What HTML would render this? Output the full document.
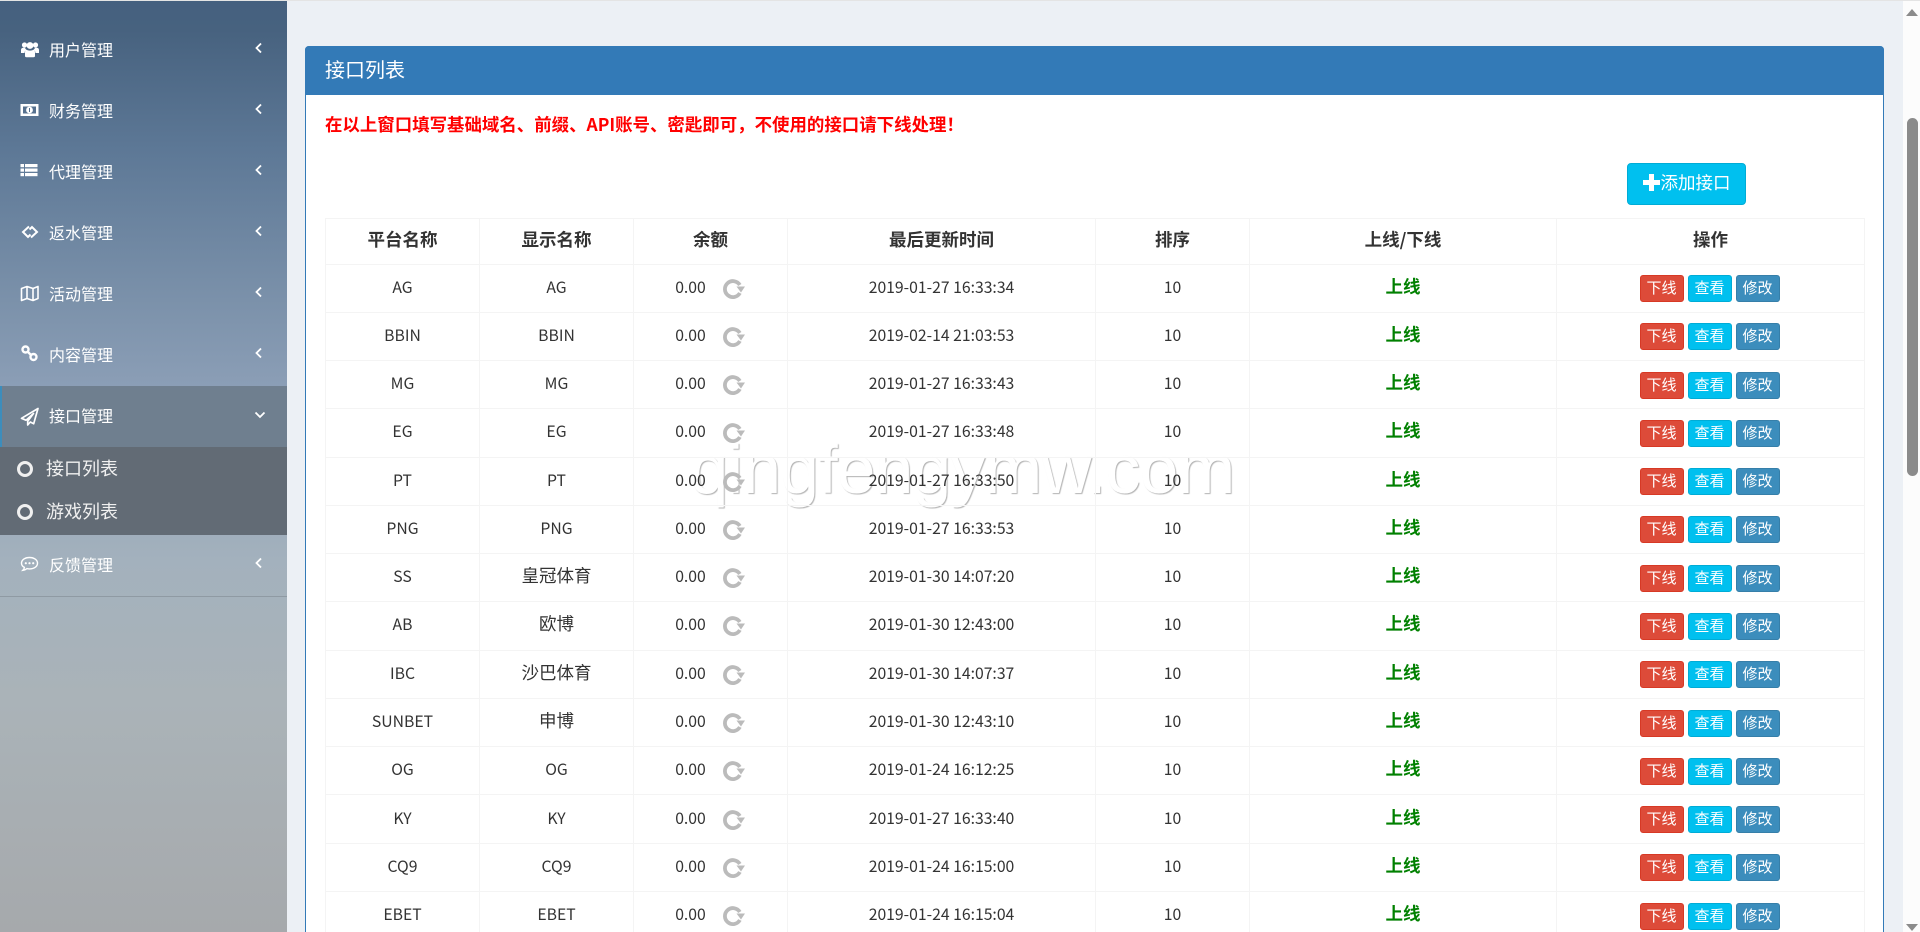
<!DOCTYPE html>
<html lang="zh"><head><meta charset="utf-8"><title>接口列表</title>
<style>
*{box-sizing:border-box}
html,body{margin:0;width:1920px;height:932px;overflow:hidden;background:#ecf0f5;font-family:"Noto Sans CJK SC","Liberation Sans",sans-serif;color:#333}
#wrap{position:relative;width:1920px;height:932px;overflow:hidden;background:#ecf0f5}
#top{position:absolute;left:0;top:0;width:1920px;height:1px;background:#e4e4e4;z-index:5}
#side{position:absolute;left:0;top:0;width:287px;height:932px;background:linear-gradient(180deg,#45607f 0,#47627f 30px,#5d7896 150px,#7b91aa 300px,#8b9eb6 386px,#a3b1bd 560px,#aab3b8 700px,#a6a9ac 932px)}
.m{position:absolute;left:0;width:287px;height:61px;color:#fff;font-size:16px}
.m b{position:absolute;left:49px;top:calc(50% - 2px);transform:translateY(-50%);font-weight:400;line-height:20px;white-space:nowrap}
.m svg.i{position:absolute;left:20px;top:19px;width:20px;height:20px}
.m svg.c{position:absolute;left:254px;top:22px;width:10px;height:12px}
#act{background:#6f7f8f;border-left:2px solid #3c8dbc}
#sub{position:absolute;left:0;top:447px;width:287px;height:88px;background:#626b75}
.s{position:absolute;left:46px;color:#f0f0f0;font-size:18px;line-height:24px;white-space:nowrap}
.r{position:absolute;left:17px;width:16px;height:16px;border:3px solid #f0f0f0;border-radius:50%}
#ln{position:absolute;left:0;top:596px;width:287px;height:1px;background:#8f9aa3}
#panel{position:absolute;left:305px;top:46px;width:1579px;height:900px;background:#fff;border:1px solid #337ab7;border-radius:4px 4px 0 0}
#head{position:absolute;left:-1px;top:-1px;width:1579px;height:49px;background:#337ab7;border-radius:4px 4px 0 0;color:#fff;font-size:20px;line-height:45px;padding-left:20px}
#red{position:absolute;left:325px;top:112px;color:#f00;font-weight:700;font-size:17.45px;line-height:26px;white-space:nowrap}
#add{position:absolute;left:1627px;top:163px;width:119px;height:42px;background:#00c0ef;border:1px solid #00acd6;border-radius:4px;color:#fff;font-size:17.5px;line-height:38px;text-align:center;white-space:nowrap}
#add svg{vertical-align:-2px;margin-right:1px}
table{position:absolute;left:325px;top:218px;width:1539px;table-layout:fixed;border-collapse:collapse;font-size:15.75px}
th,td{border:1px solid #f4f4f4;text-align:center;vertical-align:middle;white-space:nowrap}
th{height:45.5px;padding:0 0 2px;font-size:17.5px;font-weight:700;color:#333;line-height:24px}
td{height:48.27px;padding:0 0 3px;line-height:24px;color:#333}
td span{font-size:17.5px}
.g{color:#008000;font-weight:700;font-size:17.5px;position:relative;top:0}
td svg{vertical-align:-6px;margin-left:16px;position:relative;top:2px}
.b{display:inline-block;width:44px;height:27px;border-radius:3px;color:#fff;font-size:15px;line-height:23px;border:1px solid;margin:0 2px;text-align:center;position:relative;top:2px;left:-1px}
.d{background:#dd4b39;border-color:#d73925}.v{background:#00c0ef;border-color:#00acd6}.e{background:#3c8dbc;border-color:#367fa9}
#wm{position:absolute;left:690px;top:425px;font-family:"Liberation Sans",sans-serif;font-size:69px;line-height:90px;color:#fff;text-shadow:1px 1px 1px rgba(0,0,0,.3);white-space:nowrap;letter-spacing:-.5px}
#sb{position:absolute;left:1903px;top:1px;width:17px;height:931px;background:#fcfcfc}
#th{position:absolute;left:1907px;top:118px;width:11px;height:358px;background:#8b8b8b;border-radius:6px}
.ar{position:absolute;left:1906px;width:0;height:0;border-left:6.5px solid transparent;border-right:6.5px solid transparent}
</style></head><body>
<div id="wrap">
<div id="top"></div>
<div id="side">
<div class="m" style="top:20px"><svg class="i" viewBox="0 0 20 20" fill="#fff"><circle cx="4.5" cy="6" r="2.6"/><circle cx="15.5" cy="6" r="2.6"/><circle cx="10" cy="6.5" r="3.4"/><path d="M1 14v-3c0-1.5 1-2.2 2.5-2.2h1.5c.2 1 1 1.6 1.6 2-1.400.6-2 1.700-2 3.200zM19 14v-3c0-1.500-1-2.200-2.500-2.200H15c-.2 1-1 1.600-1.600 2 1.400.6 2 1.700 2 3.200zM6 11c.800-.4 1.600.6 4 .6s3.200-1 4-.6c.8.4 1 1.500 1 3v3c0 1-.8 1.200-1.500 1.200h-7C5.800 18.200 5 18 5 17v-3c0-1.500.2-2.600 1-3z"/></svg><b>用户管理</b><svg class="c" viewBox="0 0 10 12"><path d="M7 1.500 2.500 6 7 10.500" fill="none" stroke="#fff" stroke-width="1.800"/></svg></div>
<div class="m" style="top:81px"><svg class="i" viewBox="0 0 20 20"><path fill="#fff" fill-rule="evenodd" d="M.5 4h18v12H.5zM3 6.500v7h13v-7z"/><circle cx="9.500" cy="10" r="3.400" fill="#fff"/><rect x="9" y="8" width="1" height="4" fill="#55708e"/></svg><b>财务管理</b><svg class="c" viewBox="0 0 10 12"><path d="M7 1.500 2.500 6 7 10.500" fill="none" stroke="#fff" stroke-width="1.800"/></svg></div>
<div class="m" style="top:142px"><svg class="i" viewBox="0 0 20 20" fill="#fff"><rect x=".5" y="3" width="3.500" height="3.200"/><rect x="5" y="3" width="12.500" height="3.200"/><rect x=".5" y="7.500" width="3.500" height="3.200"/><rect x="5" y="7.500" width="12.500" height="3.200"/><rect x=".5" y="12" width="3.500" height="3.200"/><rect x="5" y="12" width="12.500" height="3.200"/></svg><b>代理管理</b><svg class="c" viewBox="0 0 10 12"><path d="M7 1.500 2.500 6 7 10.500" fill="none" stroke="#fff" stroke-width="1.800"/></svg></div>
<div class="m" style="top:203px"><svg class="i" viewBox="0 0 20 20" fill="none" stroke="#fff" stroke-width="2"><path d="M9 4.500 3 10l5 5 2.500-2.500M11 15.500 17 10l-5-5-2.500 2.500"/></svg><b>返水管理</b><svg class="c" viewBox="0 0 10 12"><path d="M7 1.500 2.500 6 7 10.500" fill="none" stroke="#fff" stroke-width="1.800"/></svg></div>
<div class="m" style="top:264px"><svg class="i" viewBox="0 0 20 20" fill="none" stroke="#fff" stroke-width="1.600" stroke-linejoin="round"><path d="M1.500 5.500 7 3.500l6 2 5-2v12l-5 2-6-2-5.500 2zM7 3.500v12M13 5.500v12"/></svg><b>活动管理</b><svg class="c" viewBox="0 0 10 12"><path d="M7 1.500 2.500 6 7 10.500" fill="none" stroke="#fff" stroke-width="1.800"/></svg></div>
<div class="m" style="top:325px"><svg class="i" viewBox="0 0 20 20" fill="none" stroke="#fff" stroke-width="2.400"><circle cx="5.500" cy="5.500" r="3"/><circle cx="13.500" cy="13" r="3"/><path d="M8 8l3 3"/></svg><b>内容管理</b><svg class="c" viewBox="0 0 10 12"><path d="M7 1.500 2.500 6 7 10.500" fill="none" stroke="#fff" stroke-width="1.800"/></svg></div>
<div class="m" id="act" style="top:386px"><svg class="i" style="left:18px;top:21px" viewBox="0 0 20 20" fill="none" stroke="#fff" stroke-width="1.700" stroke-linejoin="round"><path d="M18 1.500 1.500 11.300l4.500 1.900 7.500-6.700-5.800 7.700v3.800l2.600-3 3.400 1.700z"/></svg><b style="left:47px">接口管理</b><svg class="c" style="left:252px;top:24px;width:12px;height:10px" viewBox="0 0 12 10"><path d="M1.500 2.500 6 7l4.500-4.500" fill="none" stroke="#fff" stroke-width="1.800"/></svg></div>
<div id="sub"><div class="r" style="top:14px"></div><div class="s" style="top:9px">接口列表</div><div class="r" style="top:57px"></div><div class="s" style="top:52px">游戏列表</div></div>
<div class="m" style="top:535px"><svg class="i" viewBox="0 0 20 20" fill="none" stroke="#fff" stroke-width="1.400"><path d="M9.500 3.500c4.500 0 8 2.400 8 5.700s-3.500 5.700-8 5.700c-1 0-1.800-.1-2.600-.3-1 .9-2.300 1.500-4 1.700.8-.8 1.400-1.800 1.500-2.900-1.900-1-2.900-2.500-2.900-4.200 0-3.300 3.500-5.700 8-5.700z"/><g fill="#fff" stroke="none"><circle cx="5.800" cy="9.200" r="1.100"/><circle cx="9.500" cy="9.200" r="1.100"/><circle cx="13.200" cy="9.200" r="1.100"/></g></svg><b>反馈管理</b><svg class="c" viewBox="0 0 10 12"><path d="M7 1.500 2.500 6 7 10.500" fill="none" stroke="#fff" stroke-width="1.800"/></svg></div>
<div id="ln"></div>
</div>
<div id="panel"><div id="head">接口列表</div></div>
<div id="red">在以上窗口填写基础域名、前缀、API账号、密匙即可，不使用的接口请下线处理！</div>
<div id="add"><svg width="17" height="17" viewBox="0 0 17 17"><path fill="#fff" d="M6 0h5v6h6v5h-6v6H6v-6H0V6h6z"/></svg>添加接口</div>
<div id="wm">qingfengymw.com</div>
<table>
<colgroup><col style="width:154px"><col style="width:154px"><col style="width:154px"><col style="width:308px"><col style="width:154px"><col style="width:307px"><col style="width:308px"></colgroup>
<tr><th>平台名称</th><th>显示名称</th><th>余额</th><th>最后更新时间</th><th>排序</th><th>上线/下线</th><th>操作</th></tr>
<tr><td>AG</td><td>AG</td><td>0.00<svg width="24" height="24" viewBox="0 0 24 24"><use href="#rf"/></svg></td><td>2019-01-27 16:33:34</td><td>10</td><td><span class="g">上线</span></td><td><a class="b d">下线</a><a class="b v">查看</a><a class="b e">修改</a></td></tr>
<tr><td>BBIN</td><td>BBIN</td><td>0.00<svg width="24" height="24" viewBox="0 0 24 24"><use href="#rf"/></svg></td><td>2019-02-14 21:03:53</td><td>10</td><td><span class="g">上线</span></td><td><a class="b d">下线</a><a class="b v">查看</a><a class="b e">修改</a></td></tr>
<tr><td>MG</td><td>MG</td><td>0.00<svg width="24" height="24" viewBox="0 0 24 24"><use href="#rf"/></svg></td><td>2019-01-27 16:33:43</td><td>10</td><td><span class="g">上线</span></td><td><a class="b d">下线</a><a class="b v">查看</a><a class="b e">修改</a></td></tr>
<tr><td>EG</td><td>EG</td><td>0.00<svg width="24" height="24" viewBox="0 0 24 24"><use href="#rf"/></svg></td><td>2019-01-27 16:33:48</td><td>10</td><td><span class="g">上线</span></td><td><a class="b d">下线</a><a class="b v">查看</a><a class="b e">修改</a></td></tr>
<tr><td>PT</td><td>PT</td><td>0.00<svg width="24" height="24" viewBox="0 0 24 24"><use href="#rf"/></svg></td><td>2019-01-27 16:33:50</td><td>10</td><td><span class="g">上线</span></td><td><a class="b d">下线</a><a class="b v">查看</a><a class="b e">修改</a></td></tr>
<tr><td>PNG</td><td>PNG</td><td>0.00<svg width="24" height="24" viewBox="0 0 24 24"><use href="#rf"/></svg></td><td>2019-01-27 16:33:53</td><td>10</td><td><span class="g">上线</span></td><td><a class="b d">下线</a><a class="b v">查看</a><a class="b e">修改</a></td></tr>
<tr><td>SS</td><td><span>皇冠体育</span></td><td>0.00<svg width="24" height="24" viewBox="0 0 24 24"><use href="#rf"/></svg></td><td>2019-01-30 14:07:20</td><td>10</td><td><span class="g">上线</span></td><td><a class="b d">下线</a><a class="b v">查看</a><a class="b e">修改</a></td></tr>
<tr><td>AB</td><td><span>欧博</span></td><td>0.00<svg width="24" height="24" viewBox="0 0 24 24"><use href="#rf"/></svg></td><td>2019-01-30 12:43:00</td><td>10</td><td><span class="g">上线</span></td><td><a class="b d">下线</a><a class="b v">查看</a><a class="b e">修改</a></td></tr>
<tr><td>IBC</td><td><span>沙巴体育</span></td><td>0.00<svg width="24" height="24" viewBox="0 0 24 24"><use href="#rf"/></svg></td><td>2019-01-30 14:07:37</td><td>10</td><td><span class="g">上线</span></td><td><a class="b d">下线</a><a class="b v">查看</a><a class="b e">修改</a></td></tr>
<tr><td>SUNBET</td><td><span>申博</span></td><td>0.00<svg width="24" height="24" viewBox="0 0 24 24"><use href="#rf"/></svg></td><td>2019-01-30 12:43:10</td><td>10</td><td><span class="g">上线</span></td><td><a class="b d">下线</a><a class="b v">查看</a><a class="b e">修改</a></td></tr>
<tr><td>OG</td><td>OG</td><td>0.00<svg width="24" height="24" viewBox="0 0 24 24"><use href="#rf"/></svg></td><td>2019-01-24 16:12:25</td><td>10</td><td><span class="g">上线</span></td><td><a class="b d">下线</a><a class="b v">查看</a><a class="b e">修改</a></td></tr>
<tr><td>KY</td><td>KY</td><td>0.00<svg width="24" height="24" viewBox="0 0 24 24"><use href="#rf"/></svg></td><td>2019-01-27 16:33:40</td><td>10</td><td><span class="g">上线</span></td><td><a class="b d">下线</a><a class="b v">查看</a><a class="b e">修改</a></td></tr>
<tr><td>CQ9</td><td>CQ9</td><td>0.00<svg width="24" height="24" viewBox="0 0 24 24"><use href="#rf"/></svg></td><td>2019-01-24 16:15:00</td><td>10</td><td><span class="g">上线</span></td><td><a class="b d">下线</a><a class="b v">查看</a><a class="b e">修改</a></td></tr>
<tr><td>EBET</td><td>EBET</td><td>0.00<svg width="24" height="24" viewBox="0 0 24 24"><use href="#rf"/></svg></td><td>2019-01-24 16:15:04</td><td>10</td><td><span class="g">上线</span></td><td><a class="b d">下线</a><a class="b v">查看</a><a class="b e">修改</a></td></tr>
</table>
<svg width="0" height="0" style="position:absolute"><defs><g id="rf"><path d="M17.900 16A8 8 0 1 1 17.800 8" fill="none" stroke="#bbb" stroke-width="3.800"/><path d="M14.500 9.500h8.500L19 15.500z" fill="#bbb"/></g></defs></svg>
<div id="sb"></div><div id="th"></div>
<div class="ar" style="top:9px;border-bottom:7px solid #8b8b8b"></div>
<div class="ar" style="top:924px;border-top:7px solid #8b8b8b"></div>
</div>
</body></html>
